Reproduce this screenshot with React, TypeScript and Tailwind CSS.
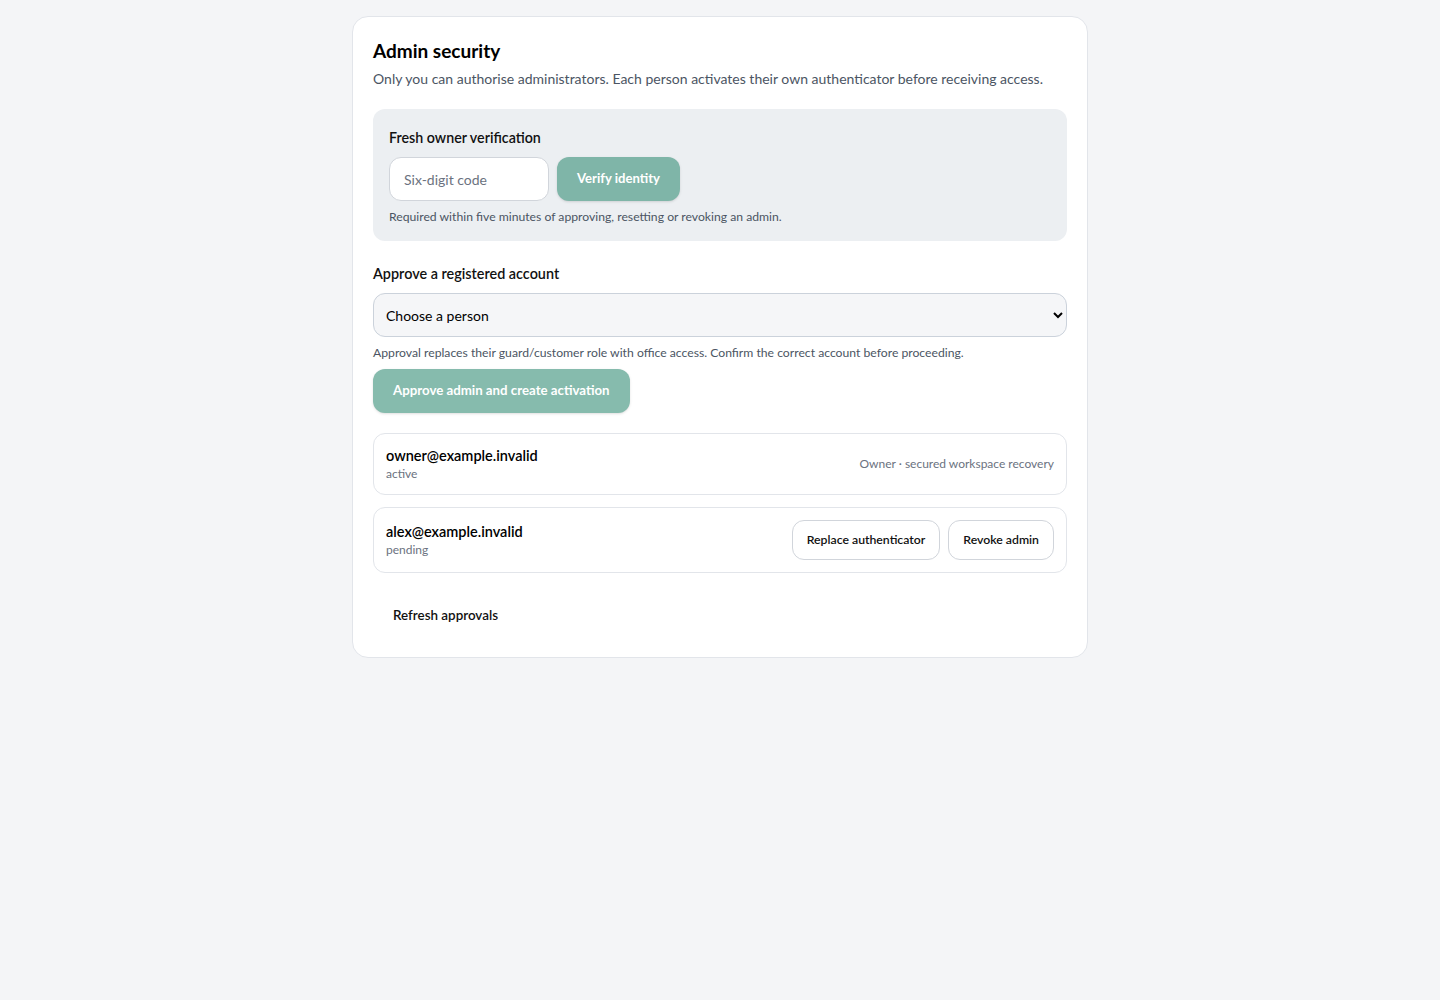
import { useState } from "react"

const admins = [
    { email: "owner@example.invalid", status: "active", owner: true },
    { email: "alex@example.invalid", status: "pending", owner: false },
]

export default function App() {
    const [code, setCode] = useState("")
    const [person, setPerson] = useState("")

    return (
        <div className="min-h-screen bg-[#f4f5f7] pt-4 font-['Lato','Noto_Sans',sans-serif] text-[#111]">
            <section className="mx-auto w-[736px] rounded-2xl border border-[#e2e5ea] bg-white px-5 pt-5 pb-[22px]">
                <h1 className="text-[19px] font-bold leading-7 text-black">Admin security</h1>
                <p className="mt-1 text-[14px] leading-5 text-[#4b5563]">
                    Only you can authorise administrators. Each person activates their own authenticator before receiving access.
                </p>

                {/* Owner re-verification */}
                <div className="mt-5 rounded-xl bg-[#eceff2] px-4 pt-[19px] pb-4">
                    <h2 className="text-[14.25px] font-semibold leading-5">Fresh owner verification</h2>
                    <div className="mt-[9px] flex gap-2">
                        <input
                            value={code}
                            onChange={(e) => setCode(e.target.value)}
                            placeholder="Six-digit code"
                            className="h-11 w-[160px] rounded-xl border border-[#d1d5db] bg-white px-[14px] text-[14px] outline-none placeholder:text-[#6b7280]"
                        />
                        <button className="h-11 rounded-xl bg-[#7fb5a8] px-5 text-[13.1px] font-bold text-white shadow-sm">
                            Verify identity
                        </button>
                    </div>
                    <p className="mt-2 text-[12.2px] leading-4 text-[#4b5563]">
                        Required within five minutes of approving, resetting or revoking an admin.
                    </p>
                </div>

                {/* Approve */}
                <h2 className="mt-[23px] text-[14.4px] font-semibold leading-5">Approve a registered account</h2>
                <select
                    value={person}
                    onChange={(e) => setPerson(e.target.value)}
                    className="mt-[9px] h-11 w-full rounded-xl border border-[#cbd2db] bg-[#f5f6f8] pl-2 pr-2 text-[14px] text-black outline-none"
                >
                    <option value="">Choose a person</option>
                </select>
                <p className="mt-2 text-[12.2px] leading-4 text-[#4b5563]">
                    Approval replaces their guard/customer role with office access. Confirm the correct account before proceeding.
                </p>
                <button className="mt-2 h-11 rounded-xl bg-[#86bbad] px-5 text-[13.25px] font-bold text-white shadow-sm">
                    Approve admin and create activation
                </button>

                {/* Admin list */}
                <div className="mt-5 flex flex-col gap-3">
                    {admins.map((a) => (
                        <div
                            key={a.email}
                            className="flex items-center justify-between rounded-xl border border-[#e2e5ea] px-3 py-3"
                        >
                            <div>
                                <p className="text-[14.5px] font-semibold leading-5 text-black">{a.email}</p>
                                <p className="text-[12px] leading-4 text-[#6b7280]">{a.status}</p>
                            </div>
                            {a.owner ? (
                                <p className="text-[12px] text-[#6b7280]">Owner · secured workspace recovery</p>
                            ) : (
                                <div className="flex gap-2">
                                    <button className="h-10 rounded-xl border border-[#d1d5db] bg-white px-[14px] text-[12.25px] font-semibold">
                                        Replace authenticator
                                    </button>
                                    <button className="h-10 rounded-xl border border-[#d1d5db] bg-white px-[14px] text-[12.25px] font-semibold">
                                        Revoke admin
                                    </button>
                                </div>
                            )}
                        </div>
                    ))}
                </div>

                <button className="mt-[22px] h-10 rounded-xl px-5 text-[13.4px] font-semibold">Refresh approvals</button>
            </section>
        </div>
    )
}
